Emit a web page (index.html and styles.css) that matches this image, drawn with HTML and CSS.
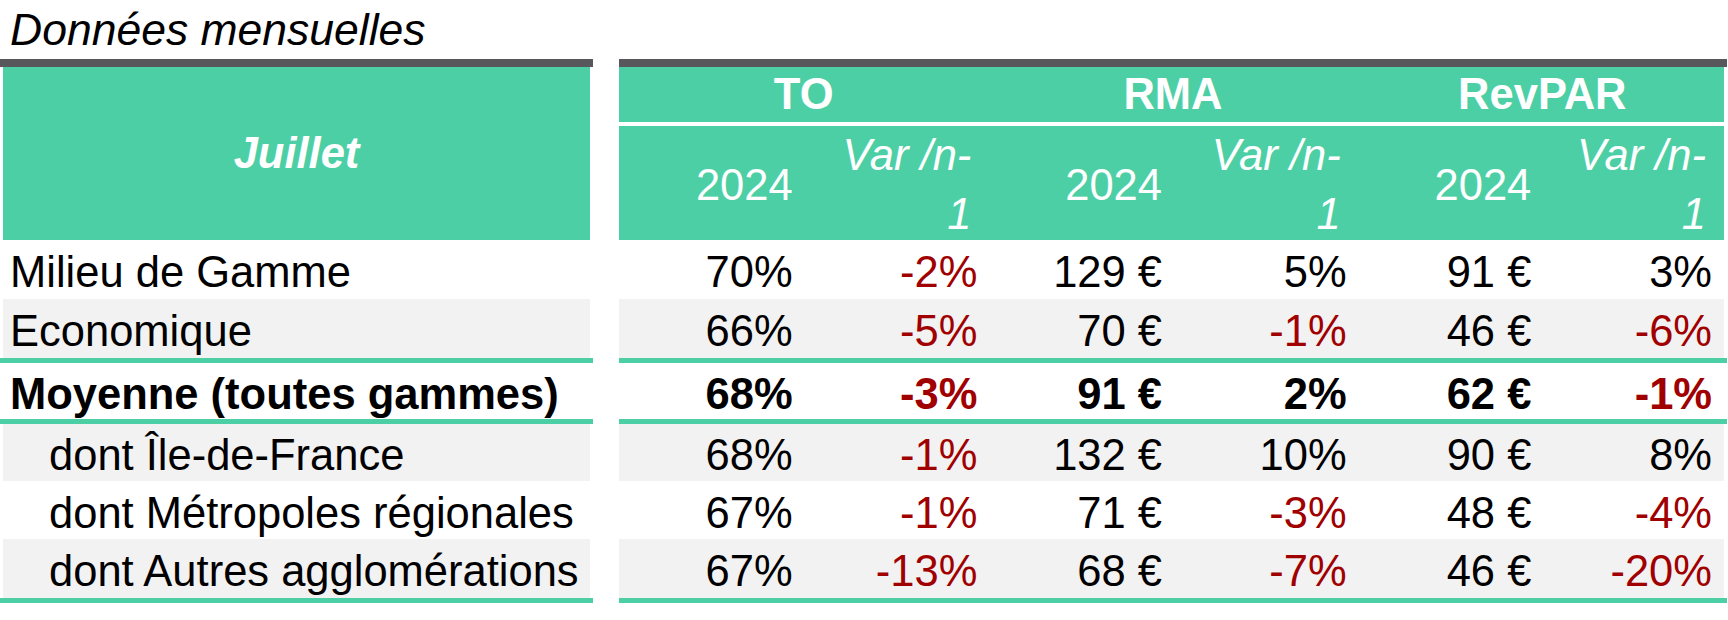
FILE: index.html
```html
<!DOCTYPE html>
<html lang="fr">
<head>
<meta charset="utf-8">
<title>Données mensuelles</title>
<link rel="stylesheet" href="styles.css">
</head>
<body>
<div class="page">
  <h1 class="title">Données mensuelles</h1>
  <div class="table">
    <div class="labels">
      <div class="bar"></div>
      <div class="label-head">Juillet</div>
      <div class="label r1">Milieu de Gamme</div>
      <div class="label r2 shade">Economique</div>
      <div class="rule"></div>
      <div class="label r3 strong">Moyenne (toutes gammes)</div>
      <div class="rule"></div>
      <div class="label r4 shade indent">dont Île-de-France</div>
      <div class="label r5 indent">dont Métropoles régionales</div>
      <div class="label r6 shade indent">dont Autres agglomérations</div>
      <div class="rule"></div>
    </div>
    <div class="metrics">
      <div class="bar"></div>
      <div class="groups">
        <div class="group">TO</div>
        <div class="group">RMA</div>
        <div class="group">RevPAR</div>
      </div>
      <div class="subheads">
        <div class="year">2024</div>
        <div class="var"><span>Var /n-<br>1</span></div>
        <div class="year">2024</div>
        <div class="var"><span>Var /n-<br>1</span></div>
        <div class="year">2024</div>
        <div class="var last"><span>Var /n-<br>1</span></div>
      </div>
      <div class="vals r1">
        <span>70%</span><span class="neg">-2%</span><span>129 €</span><span>5%</span><span>91 €</span><span>3%</span>
      </div>
      <div class="vals r2 shade">
        <span>66%</span><span class="neg">-5%</span><span>70 €</span><span class="neg">-1%</span><span>46 €</span><span class="neg">-6%</span>
      </div>
      <div class="rule"></div>
      <div class="vals r3 strong">
        <span>68%</span><span class="neg">-3%</span><span>91 €</span><span>2%</span><span>62 €</span><span class="neg">-1%</span>
      </div>
      <div class="rule"></div>
      <div class="vals r4 shade">
        <span>68%</span><span class="neg">-1%</span><span>132 €</span><span>10%</span><span>90 €</span><span>8%</span>
      </div>
      <div class="vals r5">
        <span>67%</span><span class="neg">-1%</span><span>71 €</span><span class="neg">-3%</span><span>48 €</span><span class="neg">-4%</span>
      </div>
      <div class="vals r6 shade">
        <span>67%</span><span class="neg">-13%</span><span>68 €</span><span class="neg">-7%</span><span>46 €</span><span class="neg">-20%</span>
      </div>
      <div class="rule"></div>
    </div>
  </div>
</div>
</body>
</html>
```
FILE: styles.css
```css
* {
  box-sizing: border-box;
  margin: 0;
  padding: 0;
}

body {
  background: #ffffff;
  color: #000000;
  font-family: "Liberation Sans", Arial, sans-serif;
}

.title {
  height: 59px;
  padding: 5px 0 0 10px;
  font-size: 44.5px;
  line-height: 50px;
  font-style: italic;
  font-weight: normal;
  white-space: nowrap;
}

.table {
  display: flex;
  width: 1727px;
  font-size: 43.5px;
}

.labels {
  width: 593px;
  flex: none;
}

.metrics {
  width: 1108px;
  flex: none;
  margin-left: 26px;
}

.bar {
  height: 8px;
  background: #58575c;
}

.rule {
  height: 5px;
  background: #4dcfa6;
}

.label-head {
  height: 173px;
  margin: 0 3px;
  background: #4dcfa6;
  color: #ffffff;
  font-weight: bold;
  font-style: italic;
  display: flex;
  align-items: center;
  justify-content: center;
}

.label {
  margin: 0 3px;
  padding: 6px 0 0 7px;
  display: flex;
  align-items: center;
  white-space: nowrap;
}

.indent {
  padding-left: 46px;
}

.r1 { height: 59px; }
.r2 { height: 59px; }
.r3 { height: 56px; }
.r4 { height: 57px; }
.r5 { height: 58px; }
.r6 { height: 59px; }

.shade {
  background: #f2f2f2;
}

.strong {
  font-weight: bold;
}

.groups {
  display: grid;
  grid-template-columns: repeat(3, 1fr);
  height: 55px;
  margin-bottom: 4px;
  background: #4dcfa6;
  box-shadow: inset -3px 0 0 #ffffff;
  color: #ffffff;
  font-weight: bold;
}

.group {
  display: flex;
  align-items: center;
  justify-content: center;
}

.subheads {
  display: grid;
  grid-template-columns: repeat(6, 1fr);
  height: 114px;
  background: #4dcfa6;
  box-shadow: inset -3px 0 0 #ffffff;
  color: #ffffff;
}

.year,
.var {
  display: flex;
  align-items: center;
  justify-content: flex-end;
  padding-right: 11px;
  white-space: nowrap;
}

.var {
  padding-right: 17px;
  font-style: italic;
  text-align: right;
}

.var span {
  line-height: 59px;
}

.var.last {
  padding-right: 21px;
}

.vals {
  display: grid;
  grid-template-columns: repeat(6, 1fr);
  box-shadow: inset -3px 0 0 #ffffff;
}

.vals.shade {
  background: #f2f2f2;
}

.vals span {
  display: flex;
  align-items: center;
  justify-content: flex-end;
  padding: 6px 11px 0 0;
  white-space: nowrap;
}

.vals span:last-child {
  padding-right: 15px;
}

.neg {
  color: #a00000;
}
```
